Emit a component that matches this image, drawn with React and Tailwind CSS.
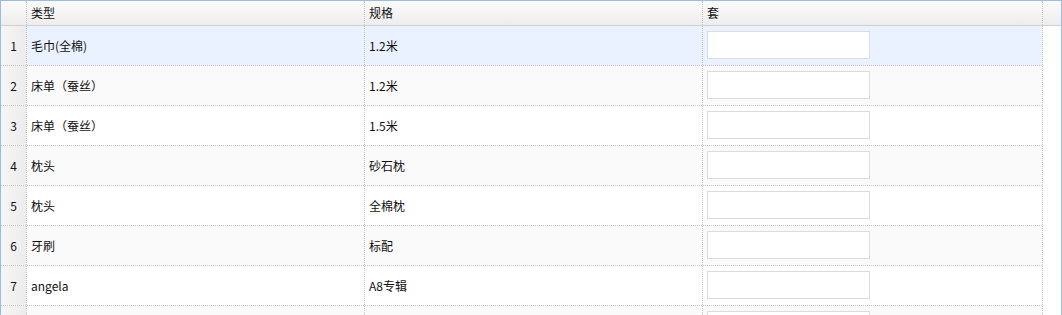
import React from 'react';

const rows = [
  { type: '毛巾(全棉)', spec: '1.2米' },
  { type: '床单（蚕丝）', spec: '1.2米' },
  { type: '床单（蚕丝）', spec: '1.5米' },
  { type: '枕头', spec: '砂石枕' },
  { type: '枕头', spec: '全棉枕' },
  { type: '牙刷', spec: '标配' },
  { type: 'angela', spec: 'A8专辑' },
  { type: '', spec: '' },
];

function Row({ idx, row }) {
  const bg = idx === 0 ? 'bg-[#eaf2ff]' : idx % 2 === 1 ? 'bg-[#fafafa]' : 'bg-white';
  return (
    <div className={`flex h-[40px] shrink-0 border-b border-dotted border-[#c4c4c4] ${bg}`}>
      <div className="w-[26px] shrink-0 border-r border-dotted border-[#c4c4c4] bg-gradient-to-r from-[#f6f6f6] to-[#ececec] flex items-center justify-center">
        {row.type ? idx + 1 : ''}
      </div>
      <div className="w-[338px] shrink-0 border-r border-dotted border-[#c4c4c4] pl-[4px] flex items-center">
        {row.type}
      </div>
      <div className="w-[338px] shrink-0 border-r border-dotted border-[#c4c4c4] pl-[4px] flex items-center">
        {row.spec}
      </div>
      <div className="w-[340px] shrink-0 pl-[4px] pt-[5px]">
        <input type="text" className="block w-[163px] h-[28px] border border-[#dcdcdc] bg-white outline-none" />
      </div>
    </div>
  );
}

export default function App() {
  return (
    <div
      className="w-[1062px] h-[315px] overflow-hidden border-t border-x border-[#99bbe8] bg-white text-[12px] text-[#111] flex flex-col"
      style={{ fontFamily: '"Noto Sans CJK SC", "Microsoft YaHei", sans-serif' }}
    >
      {/* header */}
      <div className="flex h-[25px] shrink-0 border-b border-[#d0d0d0] bg-gradient-to-b from-[#fbfbfb] to-[#ededed]">
        <div className="w-[26px] shrink-0 border-r border-dotted border-[#c4c4c4]" />
        <div className="w-[338px] shrink-0 border-r border-dotted border-[#c4c4c4] pl-[4px] flex items-center">类型</div>
        <div className="w-[338px] shrink-0 border-r border-dotted border-[#c4c4c4] pl-[4px] flex items-center">规格</div>
        <div className="w-[340px] shrink-0 border-r border-dotted border-[#c4c4c4] pl-[4px] flex items-center">套</div>
        <div className="flex-1" />
      </div>
      {/* body */}
      <div className="flex flex-1 min-h-0">
        <div className="w-[1042px] shrink-0 flex flex-col border-r border-dotted border-[#c4c4c4]">
          {rows.map((r, i) => (
            <Row key={i} idx={i} row={r} />
          ))}
        </div>
        <div className="flex-1 bg-white" />
      </div>
    </div>
  );
}
